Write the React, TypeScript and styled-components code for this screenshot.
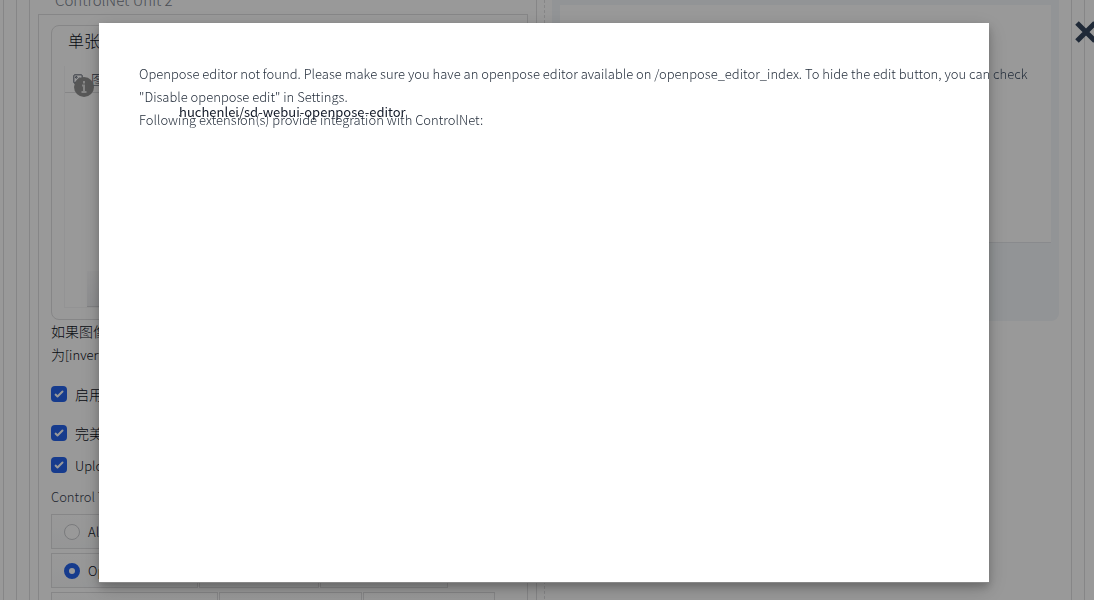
import React from "react";
import styled, { createGlobalStyle, css } from "styled-components";

const line = "#dfdfe1";

const GlobalStyle = createGlobalStyle`
  *, *::before, *::after { box-sizing: border-box; }
  body {
    margin: 0;
    overflow: hidden;
    background: #fff;
    color: #0b101b;
    font: 300 14px/23px "Noto Sans CJK SC", "Noto Sans", sans-serif;
  }
`;

const Page = styled.main`
  height: 100vh;
  overflow: hidden;
  display: flex;
  padding-left: 3px;
`;

const OuterFrame = styled.div`
  flex: 1;
  display: flex;
  padding: 0 12px;
  margin-right: -4px;
  border: solid ${line};
  border-width: 0 1px;
`;

const Frame = styled.div`
  flex: 1;
  display: flex;
  padding: 0 12px;
  border: solid ${line};
  border-width: 0 1px;
`;

const Columns = styled.div`
  flex: 1;
  display: grid;
  grid-template-columns: minmax(0, 1fr) auto minmax(0, 1fr);
  padding-right: 12px;
  border: solid ${line};
  border-width: 0 1px;
`;

const SettingsColumn = styled.section`
  padding: 0 8px;
  border-right: 1px solid ${line};
`;

const Divider = styled.div`
  margin: 0 7px;
  border-left: 1px dashed ${line};
`;

const GalleryColumn = styled.section`
  min-width: 0;
`;

const Gallery = styled.div`
  height: 321px;
  padding: 5px 8px 0;
  background: #f3f7fa;
  border-radius: 0 0 8px 8px;
`;

const GalleryView = styled.div`
  height: 238px;
  background: #fff;
  border-bottom: 1px solid #e5e7eb;
`;

const UnitTab = styled.button`
  display: block;
  height: 24px;
  margin: -13px 0 3px;
  padding: 0 17px;
  border: 0;
  background: none;
  color: #7b828e;
  font: inherit;
  font-size: 15px;
`;

const UnitPanel = styled.div`
  height: 100vh;
  padding: 10px 12px;
  border: 1px solid ${line};
`;

const ImageBox = styled.div`
  height: 295px;
  padding: 2px 12px 12px;
  border: 1px solid ${line};
  border-radius: 8px;
`;

const ImageTab = styled.button`
  display: block;
  height: 24px;
  padding: 0 4px;
  border: 0;
  background: none;
  color: #0b101b;
  font: inherit;
  font-size: 16px;
`;

const DropArea = styled.div`
  position: relative;
  display: flex;
  flex-direction: column;
  justify-content: space-between;
  height: 242px;
  margin-top: 14px;
  border: solid #f6f6f7;
  border-width: 0 0 1px 1px;
`;

const DropLabel = styled.div`
  display: flex;
  align-items: center;
  gap: 8px;
  height: 27px;
  padding: 0 8px;
  border-bottom: 1px solid ${line};
  color: #374151;
`;

const InfoBadge = styled.span`
  position: absolute;
  left: 9px;
  top: 11px;
  height: 20px;
`;

const DropTools = styled.div`
  height: 36px;
  margin-left: 22px;
  background: linear-gradient(#fafafb, #eeeff2);
  border-bottom: 1px solid #d6d7da;
`;

const Hint = styled.p`
  margin: 0 0 16px;
  white-space: nowrap;
`;

const CheckRow = styled.label<{ $gap: number }>`
  display: flex;
  align-items: center;
  gap: 8px;
  height: 24px;
  margin-bottom: ${(p) => p.$gap}px;
`;

const CheckBox = styled.input`
  appearance: none;
  width: 16px;
  height: 16px;
  margin: 0;
  border-radius: 4px;
  background: #2563eb;
  background-image: url("data:image/svg+xml,%3Csvg xmlns='http://www.w3.org/2000/svg' viewBox='0 0 16 16' fill='white'%3E%3Cpath d='M12.2 4.8a1 1 0 010 1.4l-5 5a1 1 0 01-1.4 0l-2-2a1 1 0 011.4-1.4L6.500 9.100l4.300-4.300a1 1 0 011.400 0z'/%3E%3C/svg%3E");
`;

const Latin = styled.span`
  font-size: 13px;
`;

const TypeGroup = styled.fieldset`
  margin: 0;
  padding: 0;
  border: 0;
  color: #374151;
  font-size: 13px;
`;

const TypeLegend = styled.legend`
  padding: 0;
  margin-bottom: 6px;
`;

const TypeRow = styled.div`
  display: flex;
  gap: 1px;
  margin-bottom: 4px;
`;

const TypeOption = styled.label<{ $width: number }>`
  display: flex;
  flex: none;
  align-items: center;
  gap: 8px;
  width: ${(p) => p.$width}px;
  height: 35px;
  padding: 0 12px;
  border: 1px solid ${line};
  background: linear-gradient(#fff, #f9fafb);
  color: #0b101b;
`;

const Radio = styled.input`
  appearance: none;
  width: 16px;
  height: 16px;
  margin: 0;
  border: 1px solid #cbccd0;
  border-radius: 50%;
  background: #fff;
  ${(p) =>
    p.defaultChecked &&
    css`
      border: 5px solid #2563eb;
    `}
`;

const Overlay = styled.div`
  position: fixed;
  inset: 0;
  display: flex;
  padding: 23px 105px 17px 99px;
  background: rgba(0, 0, 0, 0.4);
`;

const Dialog = styled.div`
  position: relative;
  flex: 1;
  min-width: 0;
  padding: 39px 40px;
  background: #fff;
  border-bottom: 1px solid #888;
  box-shadow: 0 4px 8px rgba(0, 0, 0, 0.2), 0 6px 20px rgba(0, 0, 0, 0.19);
  color: #1f2937;
  font-size: 13px;
`;

const Message = styled.p`
  margin: 0;
  white-space: nowrap;
`;

const ExtensionList = styled.ul`
  position: absolute;
  left: 80px;
  top: 77px;
  margin: 0;
  padding: 0;
  list-style: none;
`;

const ExtensionLink = styled.a`
  color: #111827;
  font-weight: 400;
  text-decoration: none;
`;

const CloseButton = styled.button`
  position: absolute;
  right: -4px;
  top: 20px;
  width: 24px;
  height: 24px;
  padding: 0;
  border: 0;
  background: none;
  color: #1f2937;
`;

const checks = [
  { id: "enable", label: "启用", gap: 15 },
  { id: "pixel-perfect", label: "完美像素模式", gap: 8 },
  { id: "upload", label: <Latin>Upload independent control image</Latin>, gap: 8 },
];

const typeRows = [
  [{ name: "All", width: 98 }],
  [
    { name: "OpenPose", width: 147 },
    { name: "MLSD", width: 120 },
    { name: "Lineart", width: 128 },
  ],
  [
    { name: "SoftEdge", width: 167 },
    { name: "Scribble", width: 143 },
    { name: "Tile", width: 132 },
  ],
];

function PictureIcon() {
  return (
    <svg width="10" height="10" viewBox="0 0 24 24" fill="none" stroke="currentColor" strokeWidth="2">
      <rect x="2" y="2" width="20" height="20" rx="2" />
      <circle cx="8" cy="8" r="2" />
      <path d="M22 15l-6-6L4 22" />
    </svg>
  );
}

function InfoIcon() {
  return (
    <svg width="20" height="20" viewBox="0 0 20 20">
      <circle cx="10" cy="10" r="10" fill="#929292" />
      <path d="M10 4v2.500M8 8.500h2v6.500M7.500 15h5" fill="none" stroke="#ddd" strokeWidth="2" />
    </svg>
  );
}

export default function App() {
  return (
    <>
      <GlobalStyle />
      <Page>
        <OuterFrame>
          <Frame>
            <Columns>
              <SettingsColumn>
                <UnitTab>ControlNet Unit 2</UnitTab>
                <UnitPanel>
                  <ImageBox>
                    <ImageTab>单张图像</ImageTab>
                    <DropArea>
                      <DropLabel>
                        <PictureIcon />
                        图像
                      </DropLabel>
                      <InfoBadge>
                        <InfoIcon />
                      </InfoBadge>
                      <DropTools />
                    </DropArea>
                  </ImageBox>
                  <Hint>
                    如果图像为白底黑线，请将预处理器设置
                    <br />
                    为<Latin>[invert]</Latin>
                  </Hint>
                  {checks.map((c) => (
                    <CheckRow key={c.id} $gap={c.gap}>
                      <CheckBox type="checkbox" defaultChecked />
                      {c.label}
                    </CheckRow>
                  ))}
                  <TypeGroup>
                    <TypeLegend>Control Type</TypeLegend>
                    {typeRows.map((row) => (
                      <TypeRow key={row[0].name}>
                        {row.map((t) => (
                          <TypeOption key={t.name} $width={t.width}>
                            <Radio type="radio" name="control-type" defaultChecked={t.name === "OpenPose"} />
                            {t.name}
                          </TypeOption>
                        ))}
                      </TypeRow>
                    ))}
                  </TypeGroup>
                </UnitPanel>
              </SettingsColumn>
              <Divider />
              <GalleryColumn>
                <Gallery>
                  <GalleryView />
                </Gallery>
              </GalleryColumn>
            </Columns>
          </Frame>
        </OuterFrame>
      </Page>
      <Overlay>
        <Dialog role="dialog" aria-modal="true">
          <Message>
            Openpose editor not found. Please make sure you have an openpose editor available on
            /openpose_editor_index. To hide the edit button, you can check
            <br />
            "Disable openpose edit" in Settings.
            <br />
            Following extension(s) provide integration with ControlNet:
          </Message>
          <ExtensionList>
            <li>
              <ExtensionLink href="#editor">huchenlei/sd-webui-openpose-editor</ExtensionLink>
            </li>
          </ExtensionList>
        </Dialog>
        <CloseButton aria-label="Close">
          <svg width="24" height="24" viewBox="0 0 24 24" stroke="currentColor" strokeWidth="5">
            <path d="M3 3l18 18M21 3L3 21" />
          </svg>
        </CloseButton>
      </Overlay>
    </>
  );
}
